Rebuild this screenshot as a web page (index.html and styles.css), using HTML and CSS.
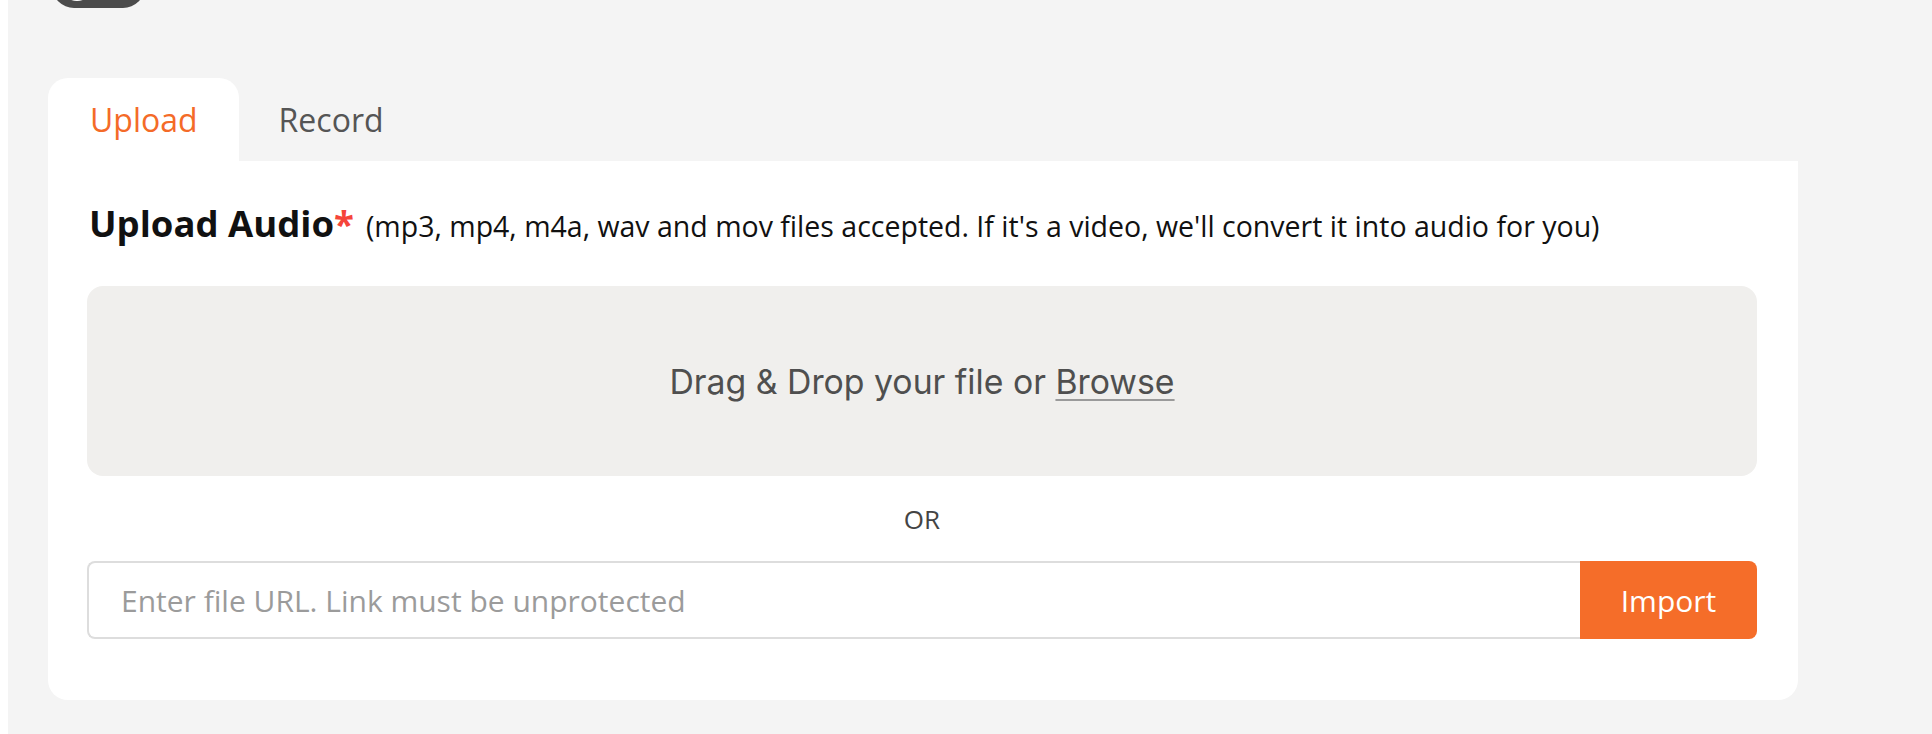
FILE: index.html
```html
<!DOCTYPE html>
<html lang="en">
<head>
<meta charset="utf-8">
<title>Upload Audio</title>
<link rel="stylesheet" href="styles.css">
</head>
<body>
<div class="page">
  <div class="topbar">
    <span class="toggle"><span class="knob"></span></span>
  </div>
  <div class="tabs">
    <div class="tab active">Upload</div>
    <div class="tab">Record</div>
  </div>
  <div class="card">
    <h2 class="heading"><span class="title">Upload Audio</span><span class="req">*</span><span class="hint">(mp3, mp4, m4a, wav and mov files accepted. If it's a video, we'll convert it into audio for you)</span></h2>
    <div class="dropzone">
      <span class="drop-text">Drag &amp; Drop your file or <a class="browse">Browse</a></span>
    </div>
    <div class="or">OR</div>
    <div class="url-row">
      <input class="url-input" type="text" placeholder="Enter file URL. Link must be unprotected">
      <button class="import-btn" type="button">Import</button>
    </div>
  </div>
</div>
</body>
</html>
```

FILE: styles.css
```css
html, body {
  margin: 0;
  padding: 0;
  background: #ffffff;
  height: 100%;
  overflow: hidden;
}

.page {
  margin-left: 8px;
  background: #f4f4f4;
  height: 734px;
  padding: 0 40px;
  font-family: "Open Sans", "Noto Sans", sans-serif;
  box-sizing: border-box;
}

.topbar {
  height: 8px;
  display: flex;
  align-items: flex-end;
}

.toggle {
  display: block;
  position: relative;
  width: 93px;
  height: 44px;
  margin-left: 4px;
  margin-top: -36px;
  border-radius: 22px;
  background: #4b4b4b;
}

.knob {
  position: absolute;
  left: 8px;
  top: 3px;
  width: 34px;
  height: 34px;
  border-radius: 50%;
  background: #ffffff;
}

.tabs {
  display: flex;
  margin-top: 70px;
}

.tab {
  height: 83px;
  padding: 0 40px;
  display: flex;
  align-items: center;
  font-size: 32px;
  color: #555555;
  border-radius: 20px 20px 0 0;
}

.tab.active {
  background: #ffffff;
  color: #f46b28;
  padding: 0 41px 0 42px;
}

.card {
  width: 1750px;
  box-sizing: border-box;
  background: #ffffff;
  border-radius: 0 0 20px 20px;
  padding: 38px 41px 61px 39px;
}

.heading {
  margin: 0;
  height: 48px;
  line-height: 48px;
  font-weight: 400;
  white-space: nowrap;
  color: #111111;
  padding-left: 2px;
}

.title {
  font-size: 36.5px;
  font-weight: 700;
}

.req {
  font-size: 36.5px;
  font-weight: 700;
  color: #f5453a;
}

.hint {
  font-size: 28.5px;
  color: #111111;
  margin-left: 12px;
}

.dropzone {
  margin-top: 39px;
  height: 190px;
  border-radius: 16px;
  background: #f0efed;
  display: flex;
  align-items: center;
  justify-content: center;
}

.drop-text {
  font-family: Inter, "Liberation Sans", sans-serif;
  font-size: 33.8px;
  color: #4f4f4f;
}

.browse {
  color: #4f4f4f;
  text-decoration: underline;
  text-decoration-color: #9a9a9a;
  text-underline-offset: 5px;
  text-decoration-thickness: 2px;
}

.or {
  height: 85px;
  display: flex;
  align-items: center;
  justify-content: center;
  font-size: 26px;
  color: #444444;
}

.url-row {
  display: flex;
  height: 78px;
}

.url-input {
  flex: 1;
  min-width: 0;
  height: 78px;
  box-sizing: border-box;
  border: 2px solid #dddddd;
  border-right: none;
  border-radius: 8px 0 0 8px;
  padding: 0 30px 0 32px;
  font-family: "Open Sans", "Noto Sans", sans-serif;
  font-size: 30px;
  color: #333333;
  background: #ffffff;
  outline: none;
}

.url-input::placeholder {
  color: #9b9b9b;
}

.import-btn {
  width: 177px;
  height: 78px;
  border: none;
  border-radius: 0 8px 8px 0;
  background: #f56d29;
  color: #ffffff;
  font-family: "Open Sans", "Noto Sans", sans-serif;
  font-size: 30px;
  padding: 0;
}
```
